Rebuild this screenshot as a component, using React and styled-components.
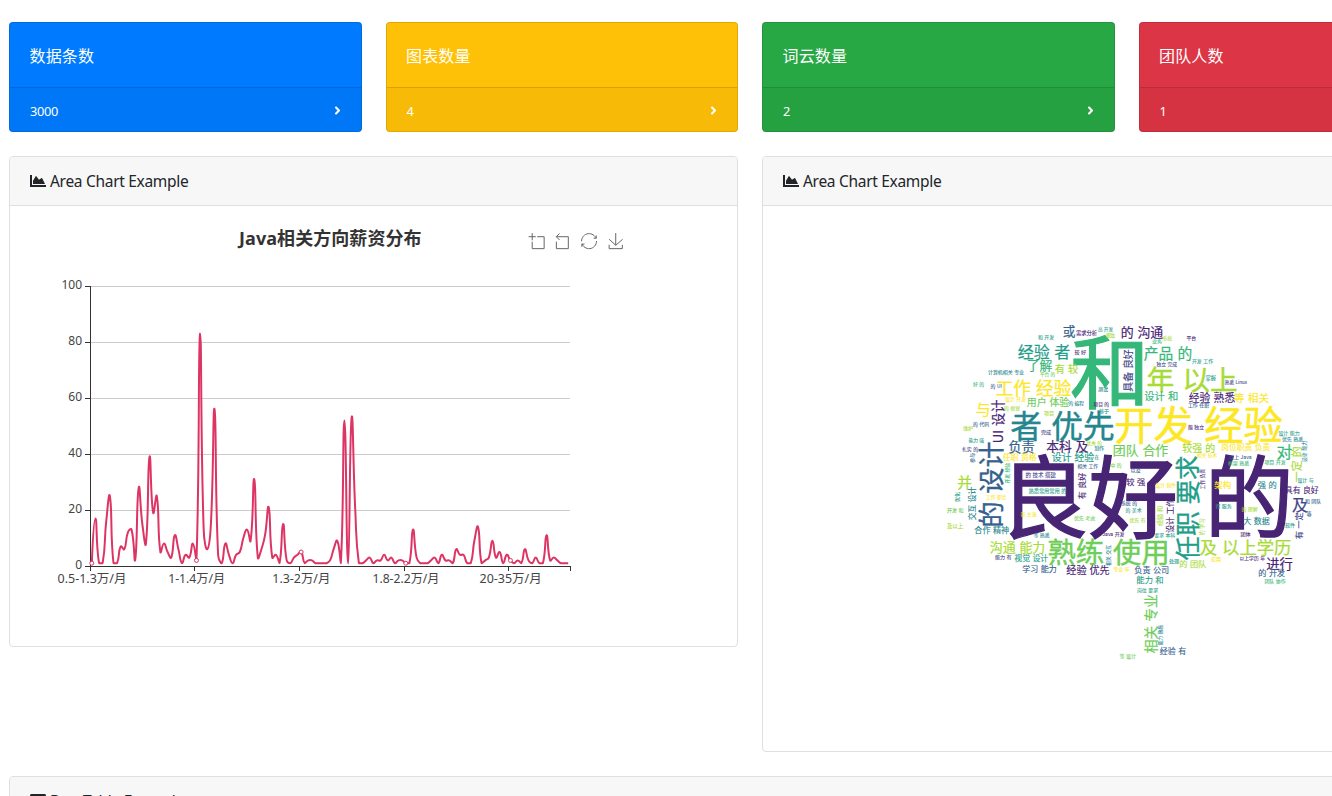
import React from "react";
import styled, { createGlobalStyle } from "styled-components";
import { FaAngleRight, FaChartArea, FaTable } from "react-icons/fa";

const FONT = '"Noto Sans", "Noto Sans CJK SC", sans-serif';

const GlobalStyle = createGlobalStyle`
  *, *::before, *::after { box-sizing: border-box; }
  html, body { margin: 0; background: #fff; overflow: hidden; }
  body {
    font-family: ${FONT};
    font-size: 16px;
    line-height: 24px;
    color: #212529;
  }
  svg { display: block; flex: none; }
`;

const Viewport = styled.main`
  width: 1332px;
  height: 796px;
  overflow: hidden;
  padding: 22px 0 0 9px;
`;

const Dashboard = styled.div`
  width: 1482px;
  display: grid;
  gap: 24px;
`;

const StatRow = styled.section`
  display: grid;
  grid-template-columns: repeat(4, 1fr);
  gap: 24px;
`;

const StatCard = styled.article`
  height: 110px;
  color: #fff;
  background: ${(p) => p.$color};
  border: 1px solid rgba(0, 0, 0, 0.125);
  border-radius: 4px;
`;

const StatTitle = styled.div`
  height: 64px;
  padding: 21px 20px 0 19.5px;
  line-height: 24px;
  letter-spacing: 0.15px;
`;

const StatFooter = styled.div`
  height: 44px;
  padding: 2px 17px 0 20px;
  display: flex;
  align-items: center;
  justify-content: space-between;
  background: rgba(0, 0, 0, 0.03);
  border-top: 1px solid rgba(0, 0, 0, 0.125);
  font-size: 12.8px;
  letter-spacing: -0.3px;
`;

const PanelRow = styled.section`
  display: grid;
  grid-template-columns: repeat(2, 1fr);
  gap: 24px;
  align-items: start;
`;

const Panel = styled.article`
  background: #fff;
  border: 1px solid #dfdfdf;
  border-radius: 4px;
  overflow: hidden;
`;

const PanelHeader = styled.header`
  height: 49px;
  padding: 0 20px;
  display: flex;
  align-items: center;
  gap: 4px;
  background: #f7f7f7;
  border-bottom: 1px solid #dfdfdf;
`;

const PanelTitle = styled.span`
  font-size: 15.5px;
  letter-spacing: -0.3px;
  white-space: nowrap;
`;

const PanelBody = styled.div`
  height: ${(p) => p.$height}px;
  padding: 20px;
`;

const Drawing = styled.svg`
  font-family: ${FONT};
`;

const CloudDrawing = styled(Drawing)`
  font-family: "Noto Sans CJK SC", sans-serif;
`;

const STATS = [
  { title: "数据条数", value: "3000", color: "#007bff" },
  { title: "图表数量", value: "4", color: "#ffc107" },
  { title: "词云数量", value: "2", color: "#28a745" },
  { title: "团队人数", value: "1", color: "#dc3545" },
];

const SALARY = [
  1, 17, 1, 1, 16, 25, 1, 1, 7, 6, 12, 13, 2, 28, 15, 8, 39, 19, 25, 5, 8, 5, 3,
  11, 6, 1, 4, 3, 8, 2, 83, 13, 6, 15, 56, 4, 1, 8, 4, 1, 4, 5, 10, 13, 9, 31, 3,
  6, 11, 21, 3, 4, 1, 15, 2, 1, 3, 4, 5, 1, 2, 2, 1, 1, 1, 1, 2, 6, 9, 1, 52, 1,
  53, 20, 1, 1, 2, 3, 1, 2, 2, 4, 2, 3, 1, 2, 2, 1, 1, 13, 3, 1, 1, 1, 2, 3, 1, 4,
  2, 2, 1, 6, 4, 4, 1, 1, 9, 14, 1, 2, 3, 9, 3, 5, 1, 4, 2, 1, 2, 1, 6, 2, 1, 3,
  1, 1, 11, 2, 3, 2, 1, 1, 1,
];

const STEP = 480 / SALARY.length;
const points = SALARY.map((v, i) => [60 + STEP * (i + 0.5), 340 - v * 2.8]);

/* Cubic smoothing whose control points stay inside the data's own range. */
function smoothPath(pts) {
  const ys = pts.map((p) => p[1]);
  const lo = Math.min(...ys);
  const hi = Math.max(...ys);
  const clamp = (y) => Math.max(lo, Math.min(hi, y));
  let d = `M${pts[0][0]},${pts[0][1]}`;
  let out = pts[0];
  for (let i = 1; i < pts.length; i++) {
    const prev = pts[i - 1];
    const p = pts[i];
    const next = pts[i + 1] || p;
    const a = Math.hypot(p[0] - prev[0], p[1] - prev[1]);
    const b = Math.hypot(next[0] - p[0], next[1] - p[1]);
    const r = b / (a + b);
    const vx = (next[0] - prev[0]) * 0.5;
    const vy = (next[1] - prev[1]) * 0.5;
    const cin = [p[0] - vx * (1 - r), clamp(p[1] - vy * (1 - r))];
    d += `C${out[0]},${out[1]} ${cin[0]},${cin[1]} ${p[0]},${p[1]}`;
    out = [p[0] + vx * r, clamp(p[1] + vy * r)];
  }
  return d;
}

const X_LABELS = [
  ["0.5-1.3万/月", 69],
  ["1-1.4万/月", 57],
  ["1.3-2万/月", 58],
  ["1.8-2.2万/月", 67],
  ["20-35万/月", 62],
];

const TOOLS = [
  [498.6, 7.1, "M0,13.5h26.9 M13.5,26.9V0 M32.1,13.5H58V58H13.5 V32.1"],
  [523.6, 7.1, "M22,1.4L9.9,13.5l12.3,12.3 M10.3,13.5H54.9v44.6 H10.3v-26"],
  [551, 7.1, "M47,18.9h9.8V8.7 M56.3,20.1 C52.1,9,40.5,0.6,26.8,2.1C12.6,3.7,1.6,16.2,2.1,30.6 M13,41.1H3.1v10.2 M3.7,39.9c4.2,11.1,15.8,19.5,29.5,18 c14.2-1.6,25.2-14.1,24.7-28.5"],
  [577.9, 7.1, "M4.7,22.9L29.3,45.5L54.7,23.4M4.6,43.6L4.6,58L53.8,58L53.8,43.6M29.2,45.1L29.2,0"],
];

function SalaryChart() {
  return (
    <Drawing width="600" height="400" viewBox="0 0 600 400">
      <text x="209" y="19" fontSize="18" fontWeight="700" fill="#333" textLength="182.5">
        Java相关方向薪资分布
      </text>
      <g fill="none" stroke="#666" strokeWidth="1">
        {TOOLS.map(([x, y, d]) => (
          <path key={d} d={d} transform={`translate(${x} ${y}) scale(0.268)`} vectorEffect="non-scaling-stroke" />
        ))}
      </g>
      {[0, 20, 40, 60, 80, 100].map((v) => {
        const y = 340.5 - v * 2.8;
        return (
          <g key={v}>
            {v > 0 && <path d={`M60,${y}H540`} stroke="#ccc" />}
            <path d={`M55,${y}H60`} stroke="#333" />
            <text x="52" y={y + 2.8} fontSize="12" fill="#444" textAnchor="end">{v}</text>
          </g>
        );
      })}
      <path d="M60.5,60V341M60,340.5H541" stroke="#333" fill="none" />
      {[60.5, 164.5, 269.5, 374.5, 478.5, 540.5].map((x) => (
        <path key={x} d={`M${x},340V345`} stroke="#333" />
      ))}
      {X_LABELS.map(([label, width], i) => (
        <text key={label} x={62 + i * 104.66 - width / 2} y="357" fontSize="12" fill="#444" textLength={width} lengthAdjust="spacingAndGlyphs">
          {label}
        </text>
      ))}
      <path d={smoothPath(points)} fill="none" stroke="#dd3464" strokeWidth="2" strokeLinejoin="bevel" />
      {[0, 29, 58, 87, 116].map((i) => (
        <circle key={i} cx={points[i][0]} cy={points[i][1]} r="2" fill="#fff" stroke="#dd3464" strokeWidth="1" />
      ))}
    </Drawing>
  );
}

const P = "#482475";
const V = "#414487";
const B = "#34618d";
const T = "#24868e";
const G = "#1f9e89";
const E = "#35b779";
const L = "#6ece58";
const M = "#a8db34";
const Y = "#fde725";

/* Level words: text, left, right, vertical centre, colour. */
const LEVEL = [
  ["良好 的", 1001, 1292, 497, P],
  ["和", 1072, 1147.5, 372, E],
  ["开发 经验", 1115, 1282, 425, Y],
  ["者 优先", 1011, 1114, 426, T],
  ["年 以上", 1147, 1237, 379.5, M],
  ["熟练 使用", 1048, 1169, 552, L],
  ["工作 经验", 996, 1071, 388, Y],
  ["及 以上学历", 1200, 1291, 547, M],
  ["沟通 能力", 990, 1045, 547, M],
  ["经验 者", 1018, 1070, 352, G],
  ["了解", 1027, 1052, 365.5, E],
  ["产品 的", 1144, 1192, 353.5, E],
  ["团队 合作", 1113, 1168, 450, L],
  ["的 沟通", 1121, 1163, 332, P],
  ["或", 1063, 1075, 331, B],
  ["需求分析", 1076, 1097, 333, P],
  ["高 开发", 1098, 1113, 329.5, G],
  ["细致", 1106, 1115, 335.6, M],
  ["和 开发", 1038, 1054, 337, G],
  ["有 较", 1055, 1078, 369, M],
  ["较 好", 1074.5, 1086, 352, P],
  ["计算机相关 专业", 988, 1024, 372.5, T],
  ["平台 的", 1040, 1055, 374, L],
  ["好 的", 973, 984, 384, E],
  ["的 UI", 990.5, 1002, 386, B],
  ["测试", 1098, 1108, 389.5, T],
  ["设计 开发", 1005, 1026, 399, Y],
  ["用户 体验", 1027, 1069, 402, L],
  ["的 编程", 1068.5, 1084, 403, T],
  ["项目 的", 1093.5, 1109, 404, P],
  ["的 视觉", 1004, 1020, 408.5, M],
  ["与", 976, 990, 409, Y],
  ["基于", 1099, 1109, 411.5, G],
  ["项目", 1044, 1054, 413, M],
  ["的 代码", 973, 989, 424, B],
  ["完成", 1041, 1051, 432.5, V],
  ["维护", 963, 973, 428.5, M],
  ["能力 强", 968.5, 984, 440, G],
  ["优秀 的", 1086.5, 1102, 443, M],
  ["制作", 1094.5, 1104, 448.5, T],
  ["业务", 1152, 1162, 341.5, E],
  ["系统", 1162.5, 1172, 338.5, M],
  ["平台", 1186.5, 1196, 338, P],
  ["独立 完成", 1156.5, 1177, 364, V],
  ["开发 工作", 1192, 1213, 361.5, G],
  ["掌握", 1205.5, 1216, 378, G],
  ["熟悉 Linux", 1224.5, 1247.5, 382.5, V],
  ["设计 和", 1144.5, 1178, 396.5, E],
  ["经验 熟悉", 1189, 1235, 397.5, P],
  ["等 相关", 1234, 1269, 397.5, Y],
  ["工作 任职", 1188, 1209, 405.5, B],
  ["能 独立", 1188, 1204, 427.5, P],
  ["设计 能力", 1278.5, 1299.5, 433, G],
  ["优先 熟悉", 1282, 1303, 439.5, T],
  ["较强 的", 1182.5, 1215, 448, M],
  ["岗位职责 负责", 1221.5, 1270, 447, Y],
  ["相关 技术", 1197, 1217, 455, Y],
  ["以上 Java", 1229, 1251.5, 457, B],
  ["框架 熟悉", 1228, 1249, 463, E],
  ["项目 开发", 1264.5, 1285.5, 462, E],
  ["对", 1277, 1292, 452, E],
  ["架构", 1214.5, 1231, 485, Y],
  ["强 的", 1258, 1276.5, 485, T],
  ["设计 与", 1297.5, 1313.5, 480, G],
  ["具有 良好", 1285, 1318.5, 490, P],
  ["及", 1292.5, 1307.5, 504.5, V],
  ["和 团队", 1305, 1321, 501.5, B],
  ["等", 1306.5, 1311.5, 514, B],
  ["设计 软件", 1155.5, 1176, 485, Y],
  ["以及", 1130.5, 1140.5, 470, B],
  ["较 强", 1126.5, 1145, 482, P],
  ["系统 的", 1121, 1137, 503, B],
  ["的 美术", 1125.5, 1141.5, 510, G],
  ["优先 有", 1129.5, 1145.5, 520.5, M],
  ["要求 本科", 1154.5, 1175, 535, G],
  ["得 服务", 1215.5, 1231.5, 506, G],
  ["的 理解", 1241.5, 1257.5, 509, M],
  ["大 数据", 1243.5, 1269.5, 521, T],
  ["软件", 1285, 1295, 525.5, G],
  ["团体", 1240.5, 1250.5, 534, P],
  ["以上学历 年", 1239.5, 1265, 558, P],
  ["应用", 1211, 1221, 559, Y],
  ["处理", 1169, 1179, 561, G],
  ["的 团队", 1179.5, 1206, 564, M],
  ["进行", 1266.5, 1292.5, 563.5, P],
  ["负责 公司", 1134.5, 1169, 570, B],
  ["扎实 的", 962, 978, 449, V],
  ["负责", 1008.5, 1034.5, 446.5, B],
  ["本科 及", 1046.5, 1088, 446, P],
  ["任职 资格", 1003, 1036.5, 456.5, Y],
  ["设计 经验", 1052, 1094, 457, G],
  ["在", 1094.5, 1099, 457.5, T],
  ["相关 工作", 1077.5, 1098, 466, B],
  ["中 的", 1110.5, 1121.5, 465, L],
  ["并", 957.5, 971.5, 482.5, M],
  ["的 技术 搭建", 1025.5, 1056, 474.5, V],
  ["熟悉常用常用 的", 1028.5, 1066.5, 491, G],
  ["工作 职责", 986, 1006.5, 497, Y],
  ["开发 和", 947, 963.5, 510, L],
  ["及以上", 947, 963, 525.5, M],
  ["带 主流", 1020.5, 1036.5, 514, Y],
  ["优先 考虑", 1074, 1095, 518, L],
  ["合作 精神", 974.5, 1009, 529.5, T],
  ["等 熟悉", 1033.5, 1049.5, 535, T],
  ["Java 开发", 1102.5, 1124.5, 534, P],
  ["能力 有", 995, 1011.5, 557, V],
  ["视觉 设计", 1014.5, 1048, 558, G],
  ["学习 能力", 1022.5, 1056.5, 569, B],
  ["经验 优先", 1066.5, 1109.5, 570.5, P],
  ["专业 年", 1113.5, 1129.5, 569, Y],
  ["能力 和", 1136.5, 1163.5, 580, G],
  ["岗位 要求", 1137, 1158, 590, G],
  ["经验 有", 1160, 1186, 651, B],
  ["等 设计", 1119.5, 1136, 656, L],
  ["的 开发", 1258.5, 1285, 573, B],
  ["团队 协作", 1264.5, 1285.5, 581, E],
];

/* Upright words, read upward: text, top, bottom, horizontal centre, colour. */
const UPRIGHT = [
  ["任职 要求", 456, 560, 1187.5, G],
  ["的 设计", 442, 527, 991.5, B],
  ["相关 专业", 594.5, 653, 1151, L],
  ["UI 设计", 399.5, 443.5, 997.5, P],
  ["具备 良好", 349.5, 391.5, 1128, V],
  ["一定 的", 446.5, 482, 1297, M],
  ["设计 能力", 441, 462, 1304, T],
  ["有 一定", 512.5, 539, 1299, V],
  ["工作 负责", 469, 489.5, 1202, P],
  ["经验 和", 506, 526, 1160, M],
  ["设计 工作", 499, 532.5, 1169.5, P],
  ["的 学习", 518.5, 535.5, 1202, M],
  ["参与", 453, 463, 972, B],
  ["有 良好", 473, 499, 1081.5, P],
  ["开发 经验", 463, 483.5, 1007, E],
  ["优化", 492, 502, 957.5, G],
  ["交互 设计", 487, 520, 972, T],
  ["相关 交互", 545, 566, 1108, T],
  ["能力 熟悉", 625, 645.5, 1160, T],
];

function emWidth(text) {
  let w = -0.05;
  for (const c of text) w += c === " " ? 0.3 : c > "\u2000" ? 1 : 0.54;
  return w;
}

function Word({ text, start, end, cross, color, upright }) {
  const size = (end - start) / emWidth(text);
  const mid = (start + end) / 2;
  const at = upright ? `translate(${cross} ${mid}) rotate(-90)` : `translate(${mid} ${cross})`;
  return (
    <text
      transform={at}
      y={size * 0.38}
      fontSize={size}
      wordSpacing={size * 0.07}
      fill={color}
      stroke={color}
      strokeWidth={size * 0.014}
      textAnchor="middle"
    >
      {text}
    </text>
  );
}

function WordCloud() {
  return (
    <CloudDrawing width="689" height="505" viewBox="783 226 689 505">
      {LEVEL.map(([t, a, b, c, col]) => (
        <Word key={`${t}${a}${c}`} text={t} start={a} end={b} cross={c} color={col} />
      ))}
      {UPRIGHT.map(([t, a, b, c, col]) => (
        <Word key={`${t}${a}${c}`} text={t} start={a} end={b} cross={c} color={col} upright />
      ))}
    </CloudDrawing>
  );
}

export default function App() {
  return (
    <Viewport>
      <GlobalStyle />
      <Dashboard>
        <StatRow>
          {STATS.map((s) => (
            <StatCard key={s.title} $color={s.color}>
              <StatTitle>{s.title}</StatTitle>
              <StatFooter>
                {s.value}
                <FaAngleRight size={13} />
              </StatFooter>
            </StatCard>
          ))}
        </StatRow>
        <PanelRow>
          <Panel>
            <PanelHeader>
              <FaChartArea size={16} />
              <PanelTitle>Area Chart Example</PanelTitle>
            </PanelHeader>
            <PanelBody $height={440}>
              <SalaryChart />
            </PanelBody>
          </Panel>
          <Panel>
            <PanelHeader>
              <FaChartArea size={16} />
              <PanelTitle>Area Chart Example</PanelTitle>
            </PanelHeader>
            <PanelBody $height={545}>
              <WordCloud />
            </PanelBody>
          </Panel>
        </PanelRow>
        <Panel>
          <PanelHeader>
            <FaTable size={16} />
            <PanelTitle>DataTable Example</PanelTitle>
          </PanelHeader>
          <PanelBody $height={300} />
        </Panel>
      </Dashboard>
    </Viewport>
  );
}
